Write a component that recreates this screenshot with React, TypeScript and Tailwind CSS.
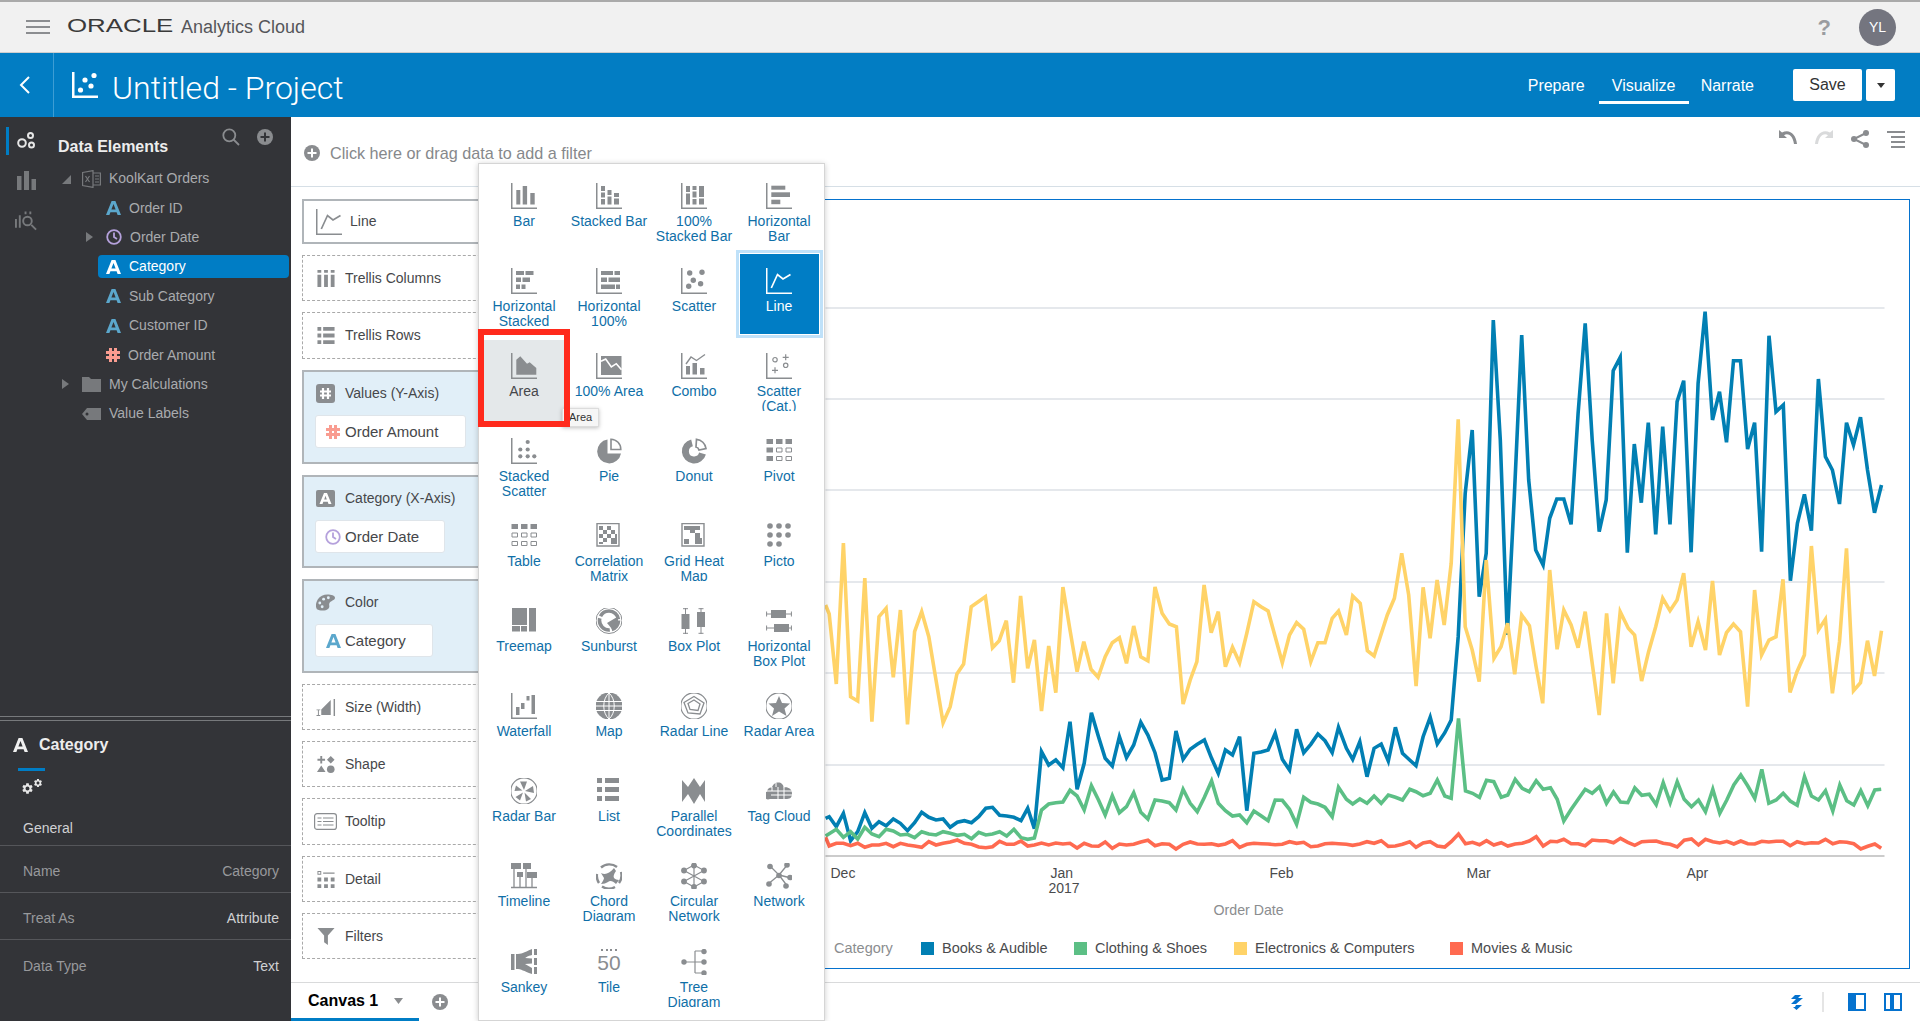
import React from 'react';
import { MdSettings } from 'react-icons/md';

type RectT = number[];
const Rects = ({ r }: { r: RectT[] }) => (
  <>
    {r.map((a, i) => (
      <rect key={i} x={a[0]} y={a[1]} width={a[2]} height={a[3]} />
    ))}
  </>
);
const Dots = ({ d, r = 2.4 }: { d: number[][]; r?: number }) => (
  <>
    {d.map((a, i) => (
      <circle key={i} cx={a[0]} cy={a[1]} r={r} />
    ))}
  </>
);
const Axis = () => <path d="M0 0h1.5v24.5H26V26H0z" />;
const Ic = ({ children, className = '' }: { children: React.ReactNode; className?: string }) => (
  <svg viewBox="0 0 26 26" className={`h-[26px] w-[26px] shrink-0 ${className}`} fill="currentColor">
    {children}
  </svg>
);
const O = { fill: 'none', stroke: 'currentColor' } as const;

const chartIcons: Record<string, React.ReactNode> = {
  Bar: (<><Axis /><Rects r={[[5.3, 7, 4, 14.5], [11.7, 3, 4.4, 18.5], [19.3, 10, 4.4, 11.5]]} /></>),
  'Stacked Bar': (<><Axis /><Rects r={[[5, 3, 4, 5], [5, 9.5, 4, 5], [5, 16, 4, 5.5], [11.5, 7, 4, 5], [11.5, 13.5, 4, 8], [18, 10, 5, 4], [18, 15.5, 5, 6]]} /></>),
  '100% Stacked Bar': (<><Axis /><Rects r={[[5, 3, 4, 6], [5, 10.5, 4, 11], [11.5, 3, 4, 4], [11.5, 8.5, 4, 6], [11.5, 16, 4, 5.5], [18, 3, 5, 11], [18, 15.5, 5, 6]]} /></>),
  'Horizontal Bar': (<><Axis /><Rects r={[[5.3, 2.7, 14, 4], [5.3, 9.3, 18.7, 4.7], [5.3, 16.7, 9, 4.5]]} /></>),
  'Horizontal Stacked': (<><Axis /><Rects r={[[5, 3, 8, 4], [14.5, 3, 8, 4], [5, 9.5, 5, 4.5], [11.5, 9.5, 7.5, 4.5], [5, 16.5, 4, 4.5], [10.5, 16.5, 4, 4.5]]} /></>),
  'Horizontal 100%': (<><Axis /><Rects r={[[5, 3, 12, 4], [18.5, 3, 5.5, 4], [5, 9.5, 6, 4.5], [12.5, 9.5, 11.5, 4.5], [5, 16.5, 14, 4.5], [20, 16.5, 4, 4.5]]} /></>),
  Scatter: (<><Axis /><Dots r={2.7} d={[[8.7, 5], [21, 4.3], [12.3, 12.3], [19.6, 15.7], [7.7, 18.3]]} /></>),
  Line: (<><Axis /><path d="M5.3 20L11.5 6.5L17 11L24.5 6.5" {...O} strokeWidth="1.7" /></>),
  Area: (<><Axis /><path d="M5.3 21.7V6.7L9.3 3.3L16 10.7L18.7 9.3L25.3 15V21.7z" /></>),
  '100% Area': (<><Axis /><rect x="5" y="3" width="20.5" height="19" /><path d="M5 8.3L9.7 6L15.3 14L20.3 10.7L25.5 16.7" fill="none" stroke="#fff" strokeWidth="1.6" /></>),
  Combo: (<><Axis /><Rects r={[[5, 13, 4, 8.5], [11.5, 10, 4.5, 11.5], [19, 15, 4.5, 6.5]]} /><path d="M5 11L10 4L15.5 7.5L24 1.5" {...O} strokeWidth="1.4" /></>),
  'Scatter (Cat.)': (<><Axis /><circle cx="9" cy="6.7" r="2.2" {...O} strokeWidth="1.2" /><circle cx="19.7" cy="12.3" r="2.2" {...O} strokeWidth="1.2" /><path d="M16.7 4.3h6M19.7 1.3v6M6 17.3h6M9 14.3v6" {...O} strokeWidth="1.2" /></>),
  'Stacked Scatter': (<><Axis /><Dots r={2.1} d={[[16.7, 4], [9.3, 11.5], [16.7, 11.5], [9.3, 18.3], [16.7, 18.3], [23.3, 18.3]]} /></>),
  Pie: (<><path d="M11.5 1.5A12 12 0 1 0 25 15.5H11.5z" /><path d="M15 1.2A10 10 0 0 1 24.8 11.5H15z" {...O} strokeWidth="1.6" /></>),
  Donut: (<><path d="M11 4.8A8.7 8.7 0 1 0 21.5 15.5" {...O} strokeWidth="7" /><path d="M15.5 1.3A10.6 10.6 0 0 1 25 10.5L18 12A4 4 0 0 0 15 9z" {...O} strokeWidth="1.7" /></>),
  Pivot: (<><Rects r={[[0.5, 1, 6.5, 5], [10, 1, 6.5, 5], [19.5, 1, 6.5, 5], [0.5, 9.5, 6.5, 5], [0.5, 18, 6.5, 5]]} /><path d="M10.5 10h5.5v4h-5.5zM20 10h5.5v4H20zM10.5 18.5h5.5v4h-5.5zM20 18.5h5.5v4H20z" {...O} strokeWidth="1" /></>),
  Table: (<><Rects r={[[0.5, 1, 6.5, 5], [10, 1, 6.5, 5], [19.5, 1, 6.5, 5]]} /><path d="M1 10h5.5v4H1zM10.5 10h5.5v4h-5.5zM20 10h5.5v4H20zM1 18.5h5.5v4H1zM10.5 18.5h5.5v4h-5.5zM20 18.5h5.5v4H20z" {...O} strokeWidth="1" /></>),
  'Correlation Matrix': (<><path d="M1 .5h22v22.5H1z" {...O} strokeWidth="1.4" /><Rects r={[[3, 3, 4, 4], [11, 3, 4, 4], [15, 7, 4, 4], [7, 7, 4, 4], [3, 11, 4, 4], [11, 11, 4, 4], [19, 11, 2, 4], [7, 15, 4, 4], [15, 15, 6, 6], [3, 19, 4, 2]]} /></>),
  'Grid Heat Map': (<><path d="M1 .5h22v22.5H1z" {...O} strokeWidth="1.4" /><Rects r={[[3, 3, 16, 4], [9, 7, 5, 3], [14, 10, 5, 5], [14, 15, 7, 6], [3, 16, 5, 5]]} /></>),
  Picto: (<Dots r={2.8} d={[[4, 3], [13, 3], [22, 3], [4, 12], [13, 12], [22, 12], [4, 21], [13, 21]]} />),
  Treemap: (<Rects r={[[1, 0, 15, 17], [1, 18, 8, 5.5], [10, 18, 6, 5.5], [18, 0, 7, 23.5]]} />),
  Sunburst: (<><circle cx="13" cy="12.5" r="13" {...O} strokeWidth="1" /><circle cx="13" cy="12.5" r="9.5" {...O} strokeWidth="3.6" strokeDasharray="12 2 18 2 24 2" /><circle cx="13" cy="12.5" r="3" fill="#fff" /><path d="M11 15l11-6.5v8.5l-6 4z" /></>),
  'Box Plot': (<><path d="M4.5 0v26M2 .7h5M2 25.3h5M20 0v26M17.5 .7h5M17.5 25.3h5" {...O} strokeWidth="1" /><Rects r={[[.5, 6, 8, 15], [16, 4, 8, 15]]} /></>),
  'Horizontal Box Plot': (<><path d="M0 6h26M.6 3.5v5M25.4 3.5v5M0 20h26M.6 17.5v5M25.4 17.5v5" {...O} strokeWidth="1" /><Rects r={[[5, 2, 15, 8], [8, 16, 15, 8]]} /></>),
  Waterfall: (<><Axis /><Rects r={[[5, 14, 3.5, 8], [10, 10, 3.5, 6], [15.5, 3, 3, 4.5], [20.5, 2, 3.5, 19]]} /></>),
  Map: (<><circle cx="13" cy="13" r="13.5" /><path d="M0 8.5h26M0 13h26M0 17.5h26M13 0v26M13 0C6 6 6 20 13 26M13 0c7 6 7 20 0 26" fill="none" stroke="#fff" strokeWidth="1" /></>),
  'Radar Line': (<><circle cx="13" cy="13" r="13.2" {...O} strokeWidth="1.2" /><path d="M13 3.5L23 10L19 21L7 20L3 9.5z" {...O} strokeWidth="1.3" /><path d="M13 7L19 11L17 17.5L9 16.5L7 10.5z" {...O} strokeWidth="1.3" /></>),
  'Radar Area': (<><circle cx="13" cy="13" r="13.2" {...O} strokeWidth="1.2" /><path d="M13 3L16 10L24 10.5L18.5 15.5L20.5 23L13 18.5L6 23L8 15.5L2.5 10.5L10 10z" /></>),
  'Radar Bar': (<><circle cx="13" cy="13" r="13.2" {...O} strokeWidth="1.2" /><path d="M13 12L9 3.5h7zM14 13l8-5 1 7zM13.5 14.5L20 21l-5 2.5zM12 14.5L9 22.5 4.5 19zM11.5 12.5L3.5 13 5 7.5z" /></>),
  List: (<Rects r={[[1, 0, 5, 5], [9, 0, 14, 5], [1, 9, 5, 5], [9, 9, 14, 5], [1, 18, 5, 5], [9, 18, 14, 5]]} />),
  'Parallel Coordinates': (<path d="M1 2l6 7 6-9 6 9 5-7v22l-5-8-6 10-6-10-6 8z" />),
  'Tag Cloud': (<><path d="M4 21a4 4 0 0 1-3-7.5C1.5 10 4 9 6 9.5 7 5 13 3 16 6c1 1 1.5 2 1.5 3.5 4-1 8.5 1 8.5 6s-3 5.5-6 5.5z" /><path d="M0 13h12M5 17h21M12 9v12M6 9v4M18 9v12M12 13h14M10 5v4" fill="none" stroke="#fff" strokeWidth="1" /></>),
  Timeline: (<><Rects r={[[0, 0, 10, 6], [12, 0, 8, 6], [6, 9, 6, 5], [16, 9, 10, 6]]} /><path d="M3 6v18M9 14v10M15 6v18M21 15v9M0 24.5h26" {...O} strokeWidth="1.3" /></>),
  Chord: (<><path d="M5 4.5A12.5 12.5 0 0 1 21 4M25 9a12.5 12.5 0 0 1-2 11M19 24a12.5 12.5 0 0 1-13-.5M3 20A12.5 12.5 0 0 1 1 11" {...O} strokeWidth="2.4" /><path d="M5 10c4 2 8 1 13-5l2 3c-2 3-3 5-2 7 1 1 3 2 5 2l-3 4c-3-3-6-4-8-2-2 1-4 2-7 2 2-3 3-5 3-6-1-2-2-3-3-5z" /></>),
  'Circular Network': (<><path d="M13 2L3 7.5M13 2l10 5.5M3 7.5L23 18.5M23 7.5L3 18.5M13 2v22M3 18.5L13 24M23 18.5L13 24" {...O} strokeWidth="1.2" /><Dots r={2.9} d={[[13, 2.5], [3, 7.5], [23, 7.5], [3, 18.5], [23, 18.5], [13, 24]]} /></>),
  Network: (<><path d="M4 3l9 9M22 1l-9 11M1 22l12-10M13 12l12 3M13 12l9 12" {...O} strokeWidth="1.3" /><Dots r={2.8} d={[[4, 3.5], [21, 2], [13, 12.5], [3, 21], [24, 14.5], [20, 23]]} /></>),
  Sankey: (<><Rects r={[[0, 5, 3.5, 16], [23, 0, 3, 6], [23, 9, 3, 7], [23, 18, 3, 7]]} /><path d="M5 5c6 0 7-1 16-5v6c-5 1-5 2-7 3l7 .5v5l-7 .5 7 4v6c-9-3-10-5-16-5z" /></>),
  Tree: (<><path d="M4 13h10M14 2v22M14 2h9M14 13h9M14 24h9" {...O} strokeWidth="1.2" /><Dots r={2.7} d={[[3, 13], [23, 2.5], [23, 13], [23, 24]]} /></>),
};

const menu = [
  'Bar', 'Stacked Bar', '100% Stacked Bar', 'Horizontal Bar',
  'Horizontal Stacked', 'Horizontal 100%', 'Scatter', 'Line',
  'Area', '100% Area', 'Combo', 'Scatter (Cat.)',
  'Stacked Scatter', 'Pie', 'Donut', 'Pivot',
  'Table', 'Correlation Matrix', 'Grid Heat Map', 'Picto',
  'Treemap', 'Sunburst', 'Box Plot', 'Horizontal Box Plot',
  'Waterfall', 'Map', 'Radar Line', 'Radar Area',
  'Radar Bar', 'List', 'Parallel Coordinates', 'Tag Cloud',
  'Timeline', 'Chord Diagram', 'Circular Network', 'Network',
  'Sankey', 'Tile', 'Tree Diagram',
];
const iconKey: Record<string, string> = { 'Chord Diagram': 'Chord', 'Tree Diagram': 'Tree' };
const clipped = ['Scatter (Cat.)', 'Grid Heat Map', 'Chord Diagram', 'Tree Diagram'];
const lastRow = ['Sankey', 'Tile', 'Tree Diagram'];

const AIcon = ({ className = 'text-[#5ba7cc]' }: { className?: string }) => (
  <svg viewBox="0 0 15 14" className={`h-[14px] w-[15px] shrink-0 ${className}`} fill="currentColor">
    <path fillRule="evenodd" d="M5.6 0h3.8L15 14h-3.4l-1-2.8H4.4L3.4 14H0zM5.4 8.4h4.2L7.5 3z" />
  </svg>
);
const ClockIcon = () => (
  <svg viewBox="0 0 16 16" className="h-[16px] w-[16px] shrink-0" fill="none" stroke="#b5a1dc" strokeWidth="1.8">
    <circle cx="8" cy="8" r="6.8" />
    <path d="M8 3.6V8l3 2" />
  </svg>
);
const HashIcon = ({ color = '#f99c90' }: { color?: string }) => (
  <svg viewBox="0 0 14 14" className="h-[14px] w-[14px] shrink-0" fill="none" stroke={color} strokeWidth="3">
    <path d="M4.5 0v14M9.5 0v14M0 4.5h14M0 9.5h14" />
  </svg>
);

const Tri = ({ dir, className = '' }: { dir: 'r' | 'd'; className?: string }) => (
  <svg viewBox="0 0 9 10" className={`h-[10px] w-[9px] shrink-0 ${className}`} fill="#77797c">
    {dir === 'r' ? <path d="M0 0l7 5-7 5z" /> : <path d="M9 1v9H0z" />}
  </svg>
);

const TreeRow = ({ pl, tri, icon, label, selected }: { pl: number; tri?: 'r' | 'd'; icon: React.ReactNode; label: string; selected?: boolean }) => (
  <div className="flex h-[29.4px] items-center" style={{ paddingLeft: pl }}>
    {tri && <Tri dir={tri} className="mr-[11px] -ml-[20px]" />}
    {selected ? (
      <div className="-ml-[8px] flex h-[23px] w-[191px] items-center gap-[8px] rounded-[4px] bg-[#007dc5] pl-[8px] text-white">
        {icon}
        <span className="text-[14px]">{label}</span>
      </div>
    ) : (
      <div className="flex items-center gap-[8px]">
        {icon}
        <span className="text-[14px] text-[#a9abae]">{label}</span>
      </div>
    )}
  </div>
);

const PropRow = ({ k, v, light }: { k: string; v: string; light?: boolean }) => (
  <div className="flex h-[47px] items-center justify-between border-b border-[#55565a] pt-[5px] pr-[12px] pl-[23px] text-[14px] last:border-b-0">
    <span className="text-[#98999c]">{k}</span>
    <span className={light ? 'text-[#d0d1d3]' : 'text-[#98999c]'}>{v}</span>
  </div>
);

const Box = ({ h, label, icon, pill, pillW, pillIcon }: { h: number; label: string; icon: React.ReactNode; pill?: string; pillW?: number; pillIcon?: React.ReactNode }) => (
  <div
    className={`shrink-0 ${pill ? 'border-2 border-[#b0b5b9] bg-[#e1eff8] px-[12px]' : 'flex items-center border border-dashed border-[#a9a9a9] bg-white px-[13px]'}`}
    style={{ height: h }}
  >
    <div className={`flex items-center ${pill ? 'h-[42px]' : ''}`}>
      <div className="flex w-[19px] shrink-0 items-center justify-center text-[#8a8d90]">{icon}</div>
      <span className="ml-[10px] text-[14px] text-[#46474a]">{label}</span>
    </div>
    {pill && (
      <div className="mt-[1px] -ml-[1px] flex h-[33px] items-center rounded-[3px] border border-[#dfe5ea] bg-white pt-[1px] pl-[9px]" style={{ width: pillW }}>
        <div className="flex w-[16px] justify-center">{pillIcon}</div>
        <span className="ml-[4px] text-[15px] text-[#46474a]">{pill}</span>
      </div>
    )}
  </div>
);

const Gi = ({ children }: { children: React.ReactNode }) => (
  <svg viewBox="0 0 20 20" className="h-[19px] w-[20px] shrink-0" fill="currentColor">
    {children}
  </svg>
);

const toPx = (s: string, ox: number, oy: number, sx: number, sy: number) =>
  s.trim().split(/\s+/).map((p) => {
    const [a, b] = p.split(',').map(Number);
    return `${(ox + a / sx).toFixed(1)},${(oy + b / sy).toFixed(1)}`;
  }).join(' ');
const z8 = (s: string) => toPx(s, 820, 600, 2.529, 3);
const z7 = (s: string) => toPx(s, 1370, 280, 2.851, 3);
const z9 = (s: string) => toPx(s, 1400, 700, 3, 3);

const blue = z8('13,655 22,650 40,680 58,640 76,722 94,695 112,638 130,685 148,665 166,677 184,657 202,670 220,692 238,668 256,637 274,652 292,660 310,657 328,682 346,667 364,662 382,668 400,650 418,625 435,622 453,646 471,648 489,652 507,662 524,625 541,686 559,455 577,495 595,480 613,503 631,365 649,568 667,490 685,338 703,410 720,475 738,498 756,410 774,473 792,435 810,367 828,405 846,458 864,540 882,535 899,393 917,478 935,448 953,433 971,420 989,475 1006,520 1024,450 1042,465 1060,410 1078,632 1096,460 1114,456 1132,450 1150,400 1168,478 1186,510 1204,388 1222,458 1240,433 1258,402 1276,422 1294,458 1310,382 1330,445 1346,478 1364,425 1382,530 1400,445 1418,432 1436,483 1454,382 1472,460 1490,480 1506,497 1524,410 1542,352 1560,432')
  + ' ' + z9('133,98 152,60')
  + ' ' + z7('250,1070 270,640 290,450 310,950 330,820 350,120 370,480 390,1065 410,650 431,165 451,600 471,810 492,855 511,715 531,657 551,657 572,733 592,400 612,130 632,480 652,755 672,660 692,272 712,232 732,818 752,492 772,668 792,428 813,763 833,440 854,733 874,365 893,302 914,817 934,310 954,95 975,420 995,335 1015,487 1035,242 1055,242 1075,507 1095,428 1115,815 1136,167 1156,395 1177,375 1197,902 1217,730 1237,643 1257,752 1277,297 1297,530 1317,570 1337,672 1357,428 1377,495 1397,412 1417,570 1437,698 1457,615');
const yellow = z8('13,15 22,42 40,252 58,-171 76,290 94,303 112,-66 130,365 148,50 166,25 184,232 202,30 220,373 238,95 256,35 274,110 292,240 310,368 328,320 345,222 362,192 381,20 399,5 417,-10 435,143 452,122 470,62 488,248 506,-12 524,205 541,120 559,333 577,138 595,278 613,-39 631,90 649,215 666,125 684,208 702,232 720,170 738,128 756,113 774,190 792,78 810,170 828,182 846,-39 864,40 882,72 900,80 917,312 935,240 952,185 970,-45 988,98 1006,35 1024,200 1042,142 1060,188 1078,100 1096,5 1114,20 1132,33 1150,110 1168,188 1186,105 1204,68 1222,88 1240,185 1258,128 1276,128 1294,55 1310,33 1330,105 1346,-12 1365,10 1383,152 1400,168')
  + ' ' + z7('28,1070 48,1005 68,955 89,820 109,945 130,1218 150,922 170,1075 190,900 210,1035 230,850 250,418 270,1040 290,1110 310,1205 330,840 352,1135 372,1100 391,1030 411,1183 431,1005 453,1037 472,1160 491,1270 511,870 532,1108 551,990 572,1035 592,1103 612,995 632,1150 652,1305 673,1000 692,1210 712,995 735,1045 753,1065 773,1203 793,1115 813,1040 833,955 854,992 874,960 893,880 914,1100 934,1025 955,1110 975,903 995,1125 1015,1058 1035,1032 1055,1055 1075,1280 1095,930 1115,1125 1136,1080 1156,1070 1176,898 1196,1237 1216,1175 1237,1125 1257,798 1277,1050 1297,1018 1317,1240 1337,1085 1357,805 1377,1232 1397,1208 1417,1082 1437,1188 1457,1052');
const green = z8('13,708 40,688 58,712 76,695 94,717 112,682 130,702 148,710 166,688 184,693 202,705 220,703 238,713 256,695 274,702 292,705 310,695 328,700 346,706 364,703 382,716 400,697 418,705 435,702 453,695 471,708 489,688 507,713 524,718 541,714 559,630 577,612 595,608 613,606 631,571 649,588 667,630 685,557 703,600 720,645 738,587 756,638 774,620 792,578 810,637 828,657 846,600 864,603 882,608 899,630 917,568 935,610 953,635 971,592 989,543 1006,610 1024,632 1042,648 1060,645 1078,668 1096,633 1114,647 1132,662 1150,600 1168,601 1186,628 1204,673 1222,592 1240,607 1258,612 1276,622 1294,650 1310,562 1330,598 1346,612 1364,597 1382,610 1400,588 1418,610 1436,585 1454,592 1472,600 1490,568 1506,575 1524,587 1542,580 1560,540')
  + ' ' + z9('133,288 152,295 174,55 195,273 216,280 237,292 258,241 280,245 302,292 322,285 344,238 365,265 386,275 407,242 428,268 450,263 470,298 490,363 512,328 533,298 554,268 575,280 597,260 618,310 639,276 660,306 682,308 703,264 724,286 746,283 767,314 788,248 809,308 830,245 851,298 873,320 894,300 915,335 937,268 958,340 979,300 1000,255 1021,225 1042,258 1063,295 1084,208 1105,310 1127,300 1148,280 1169,303 1190,316 1212,230 1233,288 1254,300 1275,272 1297,333 1318,255 1339,302 1360,315 1381,272 1402,317 1423,270 1442,268');
const red = z8('13,712 22,738 40,730 58,730 76,737 94,730 112,742 130,735 148,735 166,730 184,740 202,730 220,735 238,738 256,742 274,725 292,735 310,730 328,726 346,720 364,730 382,733 400,741 418,743 435,740 453,724 471,733 489,733 507,723 524,738 541,735 559,729 577,735 595,729 613,732 631,730 649,744 667,730 685,738 703,739 720,726 738,745 756,732 774,735 792,733 810,726 828,721 846,737 864,731 882,733 899,747 917,733 935,726 953,732 971,733 989,731 1006,736 1024,732 1042,722 1060,742 1078,733 1096,730 1114,731 1132,732 1150,734 1168,733 1186,725 1204,730 1222,727 1240,740 1258,738 1276,731 1294,730 1310,731 1330,733 1346,736 1364,732 1382,725 1400,730 1418,722 1436,739 1454,738 1472,733 1490,725 1506,742 1524,729 1542,725 1560,738')
  + ' ' + z9('133,441 152,425 174,402 195,431 216,427 237,434 258,422 280,435 302,428 322,438 344,432 365,430 386,423 407,410 428,438 450,424 470,425 490,418 512,431 533,431 554,437 575,420 597,422 618,422 639,428 660,415 682,427 703,436 724,425 746,424 767,423 788,430 809,433 830,441 851,421 873,417 894,435 915,418 937,425 958,429 979,424 1000,432 1021,423 1042,431 1063,432 1084,424 1105,426 1127,424 1148,424 1169,437 1190,425 1212,431 1233,428 1254,429 1275,418 1297,431 1318,425 1339,427 1360,431 1381,447 1402,439 1423,432 1442,445');

const legend: [string, string][] = [
  ['Books & Audible', 'bg-[#017fb3]'],
  ['Clothing & Shoes', 'bg-[#5cbf85]'],
  ['Electronics & Computers', 'bg-[#ffd368]'],
  ['Movies & Music', 'bg-[#ff6a50]'],
];
const legendW = [153, 160, 216, 130];

export default function App() {
  return (
    <div className="relative flex h-[1021px] w-[1920px] flex-col overflow-hidden bg-white font-['Liberation_Sans',Arial,sans-serif]">
      {/* global bar */}
      <header className="flex h-[53px] shrink-0 items-center border-t-2 border-b border-t-[#aaaaaa] border-b-[#cfcfcf] bg-[#f1f1f1] pr-[24px] pl-[26px]">
        <div className="flex w-[24px] flex-col gap-[4px]">
          <span className="h-[2px] bg-[#8b8d90]" />
          <span className="h-[2px] bg-[#8b8d90]" />
          <span className="h-[2px] bg-[#8b8d90]" />
        </div>
        <div className="ml-[17px] w-[114px]">
          <span className="inline-block origin-left scale-x-[1.36] text-[19px] leading-none text-[#3a3a3a]">ORACLE</span>
        </div>
        <span className="text-[18px] text-[#55565a]">Analytics Cloud</span>
        <span className="ml-auto text-[22px] font-bold text-[#9a9ca0]">?</span>
        <div className="ml-[28px] flex h-[37px] w-[37px] items-center justify-center rounded-full bg-[#74757f] text-[14px] text-white">YL</div>
      </header>

      {/* project bar */}
      <div className="flex h-[64px] shrink-0 items-center bg-[#027dc3] text-white">
        <div className="flex h-full w-[54px] items-center justify-center border-r border-[#3d9dd4] pr-[3px]">
          <svg viewBox="0 0 12 18" className="h-[18px] w-[12px]" fill="none" stroke="#fff" strokeWidth="2">
            <path d="M10 1L2 9l8 8" />
          </svg>
        </div>
        <svg viewBox="0 0 26 26" className="ml-[18px] h-[26px] w-[26px]" fill="#fff">
          <path d="M0 0h2.5v23.5H26V26H0z" />
          <circle cx="8.5" cy="18" r="2.6" />
          <circle cx="13" cy="8" r="2.6" />
          <circle cx="19" cy="14" r="2.6" />
          <circle cx="22" cy="3.5" r="2.6" />
        </svg>
        <span className="mt-[6px] ml-[14px] font-['Roboto',sans-serif] text-[32px] font-light">Untitled - Project</span>
        <nav className="ml-auto flex h-full items-center pt-[2px] text-[16px]">
          <span className="mr-[14px]">Prepare</span>
          <span className="relative flex h-full w-[90px] items-center justify-center">
            Visualize
            <span className="absolute top-[46px] right-0 left-0 h-[3px] bg-white" />
          </span>
          <span className="ml-[12px]">Narrate</span>
        </nav>
        <button className="ml-[39px] flex h-[32px] w-[69px] items-center justify-center rounded-[2px] bg-white text-[16px] text-[#333]">Save</button>
        <button className="mr-[25px] ml-[4px] flex h-[32px] w-[29px] items-center justify-center rounded-[2px] bg-white">
          <svg viewBox="0 0 8 5" className="h-[5px] w-[8px]" fill="#333">
            <path d="M0 0h8L4 5z" />
          </svg>
        </button>
      </div>

      <div className="relative flex min-h-0 flex-1">
        {/* sidebar */}
        <aside className="flex w-[291px] shrink-0 flex-col bg-[#333438]">
          <div className="flex min-h-0 flex-1">
            <div className="flex w-[50px] shrink-0 flex-col items-center pt-[10px]">
              <div className="relative flex h-[28px] w-full items-center justify-center pl-[2px] text-[#e6e6e6]">
                <span className="absolute top-0 left-[6px] h-[28px] w-[3px] bg-[#007dc5]" />
                <svg viewBox="0 0 19 18" className="h-[18px] w-[19px]" fill="none" stroke="currentColor" strokeWidth="2">
                  <circle cx="13.5" cy="3.5" r="2.5" />
                  <circle cx="5" cy="11" r="3.8" />
                  <circle cx="14.5" cy="13" r="2.5" />
                </svg>
              </div>
              <svg viewBox="0 0 19 19" className="mt-[16px] ml-[3px] h-[19px] w-[19px]" fill="#77797c">
                <path d="M0 5h4.5v14H0zM7 0h5v19H7zM14.5 8H19v11h-4.5z" />
              </svg>
              <svg viewBox="0 0 24 21" className="mt-[20px] ml-[2px] h-[21px] w-[23px]" fill="#77797c">
                <path d="M0 9h2v9H0zM4 5h2v13H4z" />
                <circle cx="13" cy="11" r="4.5" fill="none" stroke="#77797c" strokeWidth="2" />
                <path d="M17 15l5 5" stroke="#77797c" strokeWidth="2" />
                <path d="M10 1h2v3h-2zM15 1h2v3h-2z" />
              </svg>
            </div>
            <div className="min-w-0 flex-1">
              <div className="flex h-[47px] items-center pt-[12px] pr-[18px] pl-[8px]">
                <span className="text-[16px] font-bold text-[#ededed]">Data Elements</span>
                <svg viewBox="0 0 18 18" className="mt-[-20px] ml-auto h-[18px] w-[18px]" fill="none" stroke="#8a8c8f" strokeWidth="1.8">
                  <circle cx="7.3" cy="7.3" r="6" />
                  <path d="M11.5 11.5L17 17" />
                </svg>
                <svg viewBox="0 0 16 16" className="mt-[-20px] ml-[17px] h-[16px] w-[16px]">
                  <circle cx="8" cy="8" r="8" fill="#8a8c8f" />
                  <path d="M8 3.5v9M3.5 8h9" stroke="#333438" strokeWidth="2" />
                </svg>
              </div>
              <TreeRow pl={32} tri="d" label="KoolKart Orders" icon={
                <svg viewBox="0 0 19 18" className="h-[18px] w-[19px]" fill="none" stroke="#77797c" strokeWidth="1.2">
                  <path d="M.6 2.5L11 .6v16.8L.6 15.5zM11 3h7.4v12H11zM13 6h4M13 9h4M13 12h4" />
                  <path d="M3.5 6l4 6M7.5 6l-4 6" />
                </svg>
              } />
              <TreeRow pl={56} label="Order ID" icon={<AIcon />} />
              <TreeRow pl={56} tri="r" label="Order Date" icon={<ClockIcon />} />
              <TreeRow pl={56} selected label="Category" icon={<AIcon className="text-white" />} />
              <TreeRow pl={56} label="Sub Category" icon={<AIcon />} />
              <TreeRow pl={56} label="Customer ID" icon={<AIcon />} />
              <TreeRow pl={56} label="Order Amount" icon={<HashIcon />} />
              <TreeRow pl={32} tri="r" label="My Calculations" icon={
                <svg viewBox="0 0 19 15" className="h-[15px] w-[19px]" fill="#77797c">
                  <path d="M0 0h7l2 2h10v13H0z" />
                </svg>
              } />
              <TreeRow pl={32} label="Value Labels" icon={
                <svg viewBox="0 0 19 12" className="h-[12px] w-[19px]" fill="#77797c">
                  <path fillRule="evenodd" d="M5 0h14v12H5L0 6zM5 4.5a1.5 1.5 0 1 0 0 3 1.5 1.5 0 0 0 0-3z" />
                </svg>
              } />
            </div>
          </div>
          <div className="h-[305px] shrink-0">
            <div className="h-[5px] border-y border-[#77797c]" />
            <div className="flex h-[47px] items-center pl-[13px] text-[#ededed]">
              <AIcon className="text-[#f0f0f0]" />
              <span className="ml-[11px] text-[16px] font-bold">Category</span>
            </div>
            <div className="ml-[18px] h-[3px] w-[27px] bg-[#007dc5]" />
            <div className="ml-[21px] flex h-[26px] items-center pt-[3px] text-[#e8e8e8]">
              <MdSettings className="mt-[5px] h-[13px] w-[13px]" />
              <MdSettings className="-mt-[5px] -ml-[1px] h-[10px] w-[10px]" />
            </div>
            <div className="flex h-[49px] items-end border-b border-[#55565a] pb-[6px] pl-[23px] text-[14px] text-[#d0d1d3]">General</div>
            <PropRow k="Name" v="Category" />
            <PropRow k="Treat As" v="Attribute" light />
            <PropRow k="Data Type" v="Text" light />
          </div>
        </aside>

        {/* main */}
        <main className="flex min-w-0 flex-1 flex-col">
          <div className="flex h-[70px] shrink-0 border-b border-[#d6dfe6] pt-[26px] pl-[13px]">
            <svg viewBox="0 0 16 16" className="mt-[2px] h-[16px] w-[16px]">
              <circle cx="8" cy="8" r="8" fill="#8a8c8f" />
              <path d="M8 3.5v9M3.5 8h9" stroke="#fff" strokeWidth="2" />
            </svg>
            <span className="ml-[10px] text-[16.2px] leading-[20px] text-[#86888b]">Click here or drag data to add a filter</span>
            <div className="mt-[-13px] mr-[15px] ml-auto flex items-start gap-[18px] text-[#8a8c8f]">
              <svg viewBox="0 0 18 14" className="h-[14px] w-[18px]" fill="currentColor">
                <path d="M0 0v8h8L5 5.2C8.5 3 13.5 4.5 15 14h3C17 3.5 10-1.5 3 2.5z" />
              </svg>
              <svg viewBox="0 0 18 14" className="h-[14px] w-[18px] text-[#d9dadb]" fill="currentColor">
                <path d="M18 0v8h-8l3-2.8C9.5 3 4.5 4.5 3 14H0C1 3.5 8-1.5 15 2.5z" />
              </svg>
              <svg viewBox="0 0 18 18" className="h-[18px] w-[18px]" fill="currentColor">
                <path d="M15 3L3 9l12 6" fill="none" stroke="currentColor" strokeWidth="2" />
                <circle cx="15" cy="3" r="3" />
                <circle cx="3" cy="9" r="3" />
                <circle cx="15" cy="15" r="3" />
              </svg>
              <div className="flex w-[18px] flex-col items-end gap-[3px] pt-[1px]">
                <span className="h-[2px] w-[18px] bg-[#8a8c8f]" />
                <span className="h-[2px] w-[14px] bg-[#8a8c8f]" />
                <span className="h-[2px] w-[14px] bg-[#8a8c8f]" />
                <span className="h-[2px] w-[14px] bg-[#8a8c8f]" />
              </div>
            </div>
          </div>

          <div className="flex min-h-0 flex-1">
            {/* grammar */}
            <div className="flex w-[210px] shrink-0 flex-col gap-[11px] pt-[12px] pl-[11px]">
              <div className="flex h-[45px] shrink-0 items-center border-2 border-[#b0b5b9] pl-[12px]">
                <Ic className="text-[#8a8d90]">{chartIcons.Line}</Ic>
                <span className="ml-[8px] text-[14px] text-[#46474a]">Line</span>
              </div>
              <Box h={46} label="Trellis Columns" icon={
                <Gi><path d="M1 1h4v3H1zM8 1h4v3H8zM15 1h4v3h-4zM1 6h4v13H1zM8 6h4v13H8zM15 6h4v13h-4z" /></Gi>
              } />
              <Box h={47} label="Trellis Rows" icon={
                <Gi><path d="M1 1h4v4H1zM7 1h12v4H7zM1 8h4v4H1zM7 8h12v4H7zM1 15h4v4H1zM7 15h12v4H7z" /></Gi>
              } />
              <Box h={94} label="Values (Y-Axis)" pill="Order Amount" pillW={151} pillIcon={<HashIcon />} icon={
                <svg viewBox="0 0 19 19" className="h-[19px] w-[19px]">
                  <rect width="19" height="19" rx="3" fill="#8a8d90" />
                  <path d="M7 4v11M12 4v11M4 7.5h11M4 11.5h11" stroke="#fff" strokeWidth="2.2" />
                </svg>
              } />
              <Box h={93} label="Category (X-Axis)" pill="Order Date" pillW={130} pillIcon={<ClockIcon />} icon={
                <svg viewBox="0 0 19 17" className="h-[17px] w-[19px]">
                  <rect width="19" height="17" rx="2" fill="#8a8d90" />
                  <path fillRule="evenodd" fill="#fff" d="M8 3h3l4.5 11h-3l-.8-2.2H7.300L6.500 14h-3zM8.200 9.400h2.600L9.500 5.800z" />
                </svg>
              } />
              <Box h={94} label="Color" pill="Category" pillW={118} pillIcon={<AIcon />} icon={
                <svg viewBox="0 0 20 17" className="h-[17px] w-[20px]">
                  <path fill="#8a8d90" d="M12 0c4 0 8 1 8 3.500 0 3-5 3-6 6-.7 2 1 3.500-1 5.500-2.500 2.500-9 2.500-12 .5C-1 13 0 8 2 5 4 2 8 0 12 0z" />
                  <circle cx="4" cy="9" r="1.500" fill="#e1eff8" />
                  <circle cx="8" cy="5" r="1.500" fill="#e1eff8" />
                  <circle cx="13" cy="3.500" r="1.500" fill="#e1eff8" />
                  <circle cx="6.500" cy="13" r="1.500" fill="#e1eff8" />
                </svg>
              } />
              <Box h={46} label="Size (Width)" icon={
                <Gi><path d="M5 12L15 2v16H5zM18 1h1.500v18H18zM0 12h4v1H2.500v5H4v1H0v-1h1.500v-5H0z" /></Gi>
              } />
              <Box h={46} label="Shape" icon={
                <Gi><path d="M4 1h2v3h3v2H6v3H4V6H1V4h3zM15 1l4 4-4 4-4-4zM5 11l4.500 7H.5z" /><circle cx="15" cy="15" r="4" /></Gi>
              } />
              <Box h={47} label="Tooltip" icon={
                <svg viewBox="0 0 23 17" className="h-[17px] w-[23px] shrink-0" fill="none" stroke="#8a8d90" strokeWidth="1.2">
                  <rect x=".6" y=".6" width="21.800" height="15.800" rx="2.500" />
                  <path d="M3.500 5h4M9 5h10.500M3.500 8.500h4M9 8.500h10.500M3.500 12h4M9 12h10.500" />
                </svg>
              } />
              <Box h={46} label="Detail" icon={
                <Gi><path d="M1 1h4v4H1zM2 2v2h2V2zM7 2.500h12v1.500H7zM1 8h4v4H1zM8 8h4v4H8zM15 8h4v4h-4zM1 15h4v4H1zM8 15h4v4H8zM15 15h4v4h-4z" /></Gi>
              } />
              <Box h={46} label="Filters" icon={
                <Gi><path d="M1 1h18l-7 8v10l-4-3V9z" /></Gi>
              } />
            </div>

            {/* chart */}
            <div className="min-w-0 flex-1 pt-[12px] pr-[10px] pb-[13px]">
              <div className="flex h-full flex-col border border-[#0572ce]">
                <svg viewBox="502 200 1406 730" className="h-[730px] w-full shrink-0" fill="none">
                  {[308, 399, 490, 582, 673, 765].map((y) => (
                    <path key={y} d={`M825 ${y}H1884`} stroke="#e5e8ec" strokeWidth="2" />
                  ))}
                  <path d="M825 856H1884" stroke="#999" strokeWidth="1" />
                  <polyline points={blue} stroke="#017fb3" strokeWidth="3.6" />
                  <polyline points={green} stroke="#5cbf85" strokeWidth="3.6" />
                  <polyline points={yellow} stroke="#ffd368" strokeWidth="3.6" />
                  <polyline points={red} stroke="#ff6a50" strokeWidth="3.6" />
                  <g fill="#4a4b4d" fontSize="14">
                    <text x="830" y="878">Dec</text>
                    <text x="1050" y="878">Jan</text>
                    <text x="1048" y="893">2017</text>
                    <text x="1269" y="878">Feb</text>
                    <text x="1466" y="878">Mar</text>
                    <text x="1686" y="878">Apr</text>
                  </g>
                  <text x="1213" y="915" fill="#8b8d8f" fontSize="14.2">Order Date</text>
                </svg>
                <div className="flex h-[38px] items-center pb-[1px] pl-[332px] text-[14.5px]">
                  <span className="w-[87px] text-[#8b8d8f]">Category</span>
                  {legend.map(([t, c], i) => (
                    <div key={t} className="flex items-center" style={{ width: legendW[i] }}>
                      <span className={`h-[13px] w-[13px] ${c}`} />
                      <span className="ml-[8px] text-[#4a4b4d]">{t}</span>
                    </div>
                  ))}
                </div>
              </div>
            </div>
          </div>

          {/* bottom bar */}
          <div className="flex h-[39px] shrink-0 items-center border-t border-[#d9dadb]">
            <div className="flex h-full w-[128px] items-center border-b-[3px] border-[#007dc5] pl-[17px]">
              <span className="text-[16px] font-bold text-black">Canvas 1</span>
              <svg viewBox="0 0 9 6" className="ml-[16px] h-[6px] w-[9px]" fill="#8a8c8f">
                <path d="M0 0h9L4.500 6z" />
              </svg>
            </div>
            <svg viewBox="0 0 16 16" className="ml-[13px] h-[16px] w-[16px]">
              <circle cx="8" cy="8" r="8" fill="#8a8c8f" />
              <path d="M8 3.5v9M3.5 8h9" stroke="#fff" strokeWidth="2" />
            </svg>
            <svg viewBox="0 0 13 15" className="ml-auto h-[15px] w-[13px]" fill="#0572ce">
              <path d="M5 0h6L8 3h5L6 9H1l5-5H1zM6 10h6l-5.500 5L3 12h2z" />
            </svg>
            <span className="ml-[19px] h-[20px] w-[2px] bg-[#e5e5e5]" />
            <div className="ml-[24px] flex h-[18px] w-[18px] border-2 border-[#0572ce]">
              <span className="h-full w-[6px] bg-[#0572ce]" />
            </div>
            <div className="mr-[18px] ml-[18px] flex h-[18px] w-[18px] justify-center border-2 border-[#0572ce] pr-[3px]">
              <span className="h-full w-[4px] bg-[#0572ce]" />
            </div>
          </div>
        </main>

        {/* chart type picker */}
        <div className="absolute top-[46px] left-[478px] h-[858px] w-[347px] border border-[#d5d5d5] bg-white pl-[2.5px] shadow-[0_1px_6px_rgba(0,0,0,0.2)]">
          <div className="grid auto-rows-[85px] grid-cols-[repeat(4,85px)] pt-[6px]">
            {menu.map((m) => {
              const sel = m === 'Line';
              const hov = m === 'Area';
              const k = iconKey[m] || m;
              return (
                <div key={m} className={`relative flex flex-col items-center ${lastRow.includes(m) ? 'pt-[14px]' : 'pt-[13px]'} ${hov ? 'bg-[#e4e8ea]' : ''}`}>
                  {sel && <span className="absolute -top-[5px] -right-[1px] bottom-[2px] -left-[1px] border-[3px] border-[#bfe1f9] bg-[#007dc5] outline-1 -outline-offset-4 outline-white" />}
                  {m === 'Tile' ? (
                    <div className="flex h-[26px] w-[26px] shrink-0 flex-col items-center text-[#8a8d90]">
                      <div className="flex h-[3px] gap-[2.5px]">
                        {[0, 1, 2, 3].map((i) => <span key={i} className="h-[2px] w-[2px] bg-[#8a8d90]" />)}
                      </div>
                      <span className="text-[21px] leading-[22px]">50</span>
                    </div>
                  ) : (
                    <Ic className={`relative ${sel ? 'text-white' : 'text-[#8a8d90]'}`}>{chartIcons[k]}</Ic>
                  )}
                  <div className={`relative mt-[5px] w-[80px] overflow-hidden text-center text-[14px] leading-[15px] ${clipped.includes(m) ? 'h-[27px]' : 'h-[31px]'} ${sel ? 'text-white' : hov ? 'text-[#46474a]' : 'text-[#0f6fa8]'}`}>
                    {m}
                  </div>
                </div>
              );
            })}
          </div>
          <div className="absolute top-[244px] left-[83px] flex h-[19px] w-[37px] items-center justify-center border border-[#dcdcdc] bg-[#f6f6f6] text-[11px] text-[#333] shadow-[0_1px_4px_rgba(0,0,0,0.25)]">Area</div>
          <div className="absolute top-[165px] -left-[1px] h-[98px] w-[92px] border-[6px] border-[#ff2a1c]" />
        </div>
      </div>
    </div>
  );
}
